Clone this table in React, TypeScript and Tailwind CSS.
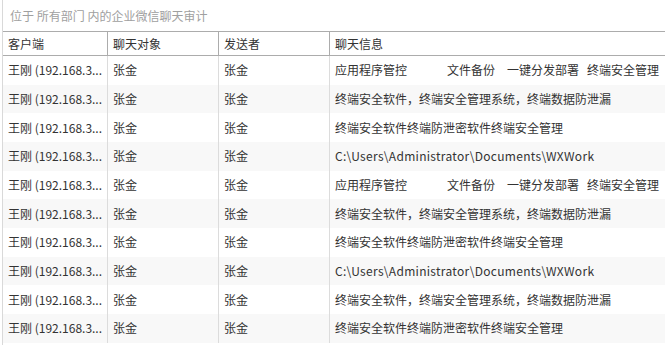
const FONT = { fontFamily: '"Microsoft YaHei", "Noto Sans CJK SC", "Noto Sans", sans-serif' };

const PATH = "C:\\Users\\Administrator\\Documents\\WXWork";

const MSGS: React.ReactNode[] = [
  <Multi key="a" />,
  "终端安全软件，终端安全管理系统，终端数据防泄漏",
  "终端安全软件终端防泄密软件终端安全管理",
  <Path key="p1" />,
  <Multi key="b" />,
  "终端安全软件，终端安全管理系统，终端数据防泄漏",
  "终端安全软件终端防泄密软件终端安全管理",
  <Path key="p2" />,
  "终端安全软件，终端安全管理系统，终端数据防泄漏",
  "终端安全软件终端防泄密软件终端安全管理",
];

function Path() {
  return <span className="tracking-[0.3px]">{PATH}</span>;
}

function Multi() {
  return (
    <>
      <span>应用程序管控</span>
      <span className="ml-[40px]">文件备份</span>
      <span className="ml-[12px]">一键分发部署</span>
      <span className="ml-[8px]">终端安全管理</span>
    </>
  );
}

export default function App() {
  return (
    <div className="h-[345px] w-[665px] overflow-hidden bg-white text-[12px] text-[#333]" style={FONT}>
      <div className="ml-[2px] h-full border-l border-[#d9d9d9]">
        <div className="flex h-[31px] items-center pl-[7px] text-[#a0a0a0]">
          位于 所有部门 内的企业微信聊天审计
        </div>
        <div className="grid h-[25px] grid-cols-[105px_111px_111px_1fr] border-y border-[#acacac]">
          {["客户端", "聊天对象", "发送者", "聊天信息"].map((h, i) => (
            <div
              key={h}
              className={`flex items-center px-[5px] ${i < 3 ? "border-r border-[#acacac]" : ""}`}
            >
              {h}
            </div>
          ))}
        </div>
        {MSGS.map((m, idx) => (
          <div
            key={idx}
            className={`grid h-[28.67px] grid-cols-[105px_111px_111px_1fr] ${idx % 2 ? "bg-[#f8f8f8]" : "bg-white"}`}
          >
            <div className="flex items-center overflow-hidden whitespace-nowrap border-r border-[#dcdcdc] pl-[5px]">
              王刚 (192.168.3...
            </div>
            <div className="flex items-center border-r border-[#dcdcdc] px-[5px]">张金</div>
            <div className="flex items-center border-r border-[#dcdcdc] px-[5px]">张金</div>
            <div className="flex items-center whitespace-nowrap px-[5px]">{m}</div>
          </div>
        ))}
      </div>
    </div>
  );
}
